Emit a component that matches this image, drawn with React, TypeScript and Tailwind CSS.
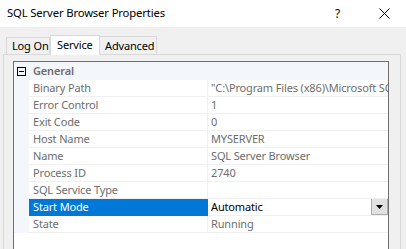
interface Prop {
  label: string;
  value: string;
  selected?: boolean;
}

const props: Prop[] = [
  { label: "Binary Path", value: "\"C:\\Program Files (x86)\\Microsoft SQL Server\\90\\Shared\\sqlbrowser.exe\"" },
  { label: "Error Control", value: "1" },
  { label: "Exit Code", value: "0" },
  { label: "Host Name", value: "MYSERVER" },
  { label: "Name", value: "SQL Server Browser" },
  { label: "Process ID", value: "2740" },
  { label: "SQL Service Type", value: "" },
  { label: "Start Mode", value: "Automatic", selected: true },
  { label: "State", value: "Running" },
];

function PropRow({ label, value, selected }: Prop) {
  return (
    <div className="flex h-[17px]">
      <div className="w-[15px] shrink-0 bg-[#f3f6fb]" />
      <div
        className={
          selected
            ? "w-[179px] shrink-0 bg-[#0078d7] pl-[4px] leading-[16px] text-white"
            : "w-[179px] shrink-0 border-b border-r border-[#f0f0f0] pl-[4px] leading-[16px] text-[#6d6d6d]"
        }
      >
        {label}
      </div>
      <div className="relative flex min-w-0 flex-1 overflow-hidden border-b border-[#f0f0f0] pl-[3px] leading-[16px]">
        <span
          className={
            selected
              ? "whitespace-nowrap text-black"
              : "whitespace-nowrap text-[#6d6d6d]"
          }
        >
          {value}
        </span>
        {selected && (
          <div className="absolute right-0 top-[-1px] flex h-[17px] w-[17px] items-center justify-center border border-[#adadad] bg-[#e1e1e1]">
            <svg width="7" height="4" viewBox="0 0 7 4">
              <path d="M0 0h7L3.5 4z" fill="#000" />
            </svg>
          </div>
        )}
      </div>
    </div>
  );
}

export default function App() {
  return (
    <div
      className="flex h-[249px] w-[406px] flex-col overflow-hidden bg-[#f0f0f0] text-[11px] tracking-[-0.15px] text-black"
      style={{ fontFamily: '"Noto Sans", "Open Sans", sans-serif' }}
    >
      {/* Title bar */}
      <div className="flex h-[27px] shrink-0 items-center bg-white pl-[7px]">
        <span className="text-[11.3px]">SQL Server Browser Properties</span>
        <span className="ml-auto mr-[39px] text-[12px]">?</span>
        <svg width="11" height="11" viewBox="0 0 11 11" className="mr-[16px]">
          <path d="M0.5 0.5l10 10M10.5 0.5l-10 10" stroke="#000" strokeWidth="1" />
        </svg>
      </div>

      {/* Tabs */}
      <div className="relative z-10 mb-[-1px] flex h-[28px] shrink-0 items-end pl-[6px]">
        <div className="mb-[1px] h-[17px] w-[44px] border border-b-0 border-[#d9d9d9] pl-[5px] leading-[16px]">
          Log On
        </div>
        <div className="h-[20px] w-[50px] border border-b-0 border-[#d9d9d9] bg-white pl-[6px] leading-[17px]">
          Service
        </div>
        <div className="mb-[1px] h-[18px] w-[57px] border border-b-0 border-l-0 border-[#d9d9d9] pl-[5px] leading-[17px]">
          Advanced
        </div>
      </div>

      {/* Tab page */}
      <div className="ml-[3px] w-[398px] flex-1 border border-[#d9d9d9] bg-[#f0f0f0] pl-[9px] pt-[6px]">
        <div className="h-[200px] w-[376px] border border-[#6e6e6e] bg-white">
          <div className="flex h-[18px] items-center bg-[#f3f6fb]">
            <div className="flex w-[15px] shrink-0 items-center justify-center">
              <div className="flex h-[9px] w-[9px] items-center justify-center border border-black">
                <div className="h-[1px] w-[5px] bg-black" />
              </div>
            </div>
            <span className="pl-[4px] font-semibold text-[#6d6d6d]">General</span>
          </div>
          {props.map((p) => (
            <PropRow key={p.label} {...p} />
          ))}
        </div>
      </div>
    </div>
  );
}
